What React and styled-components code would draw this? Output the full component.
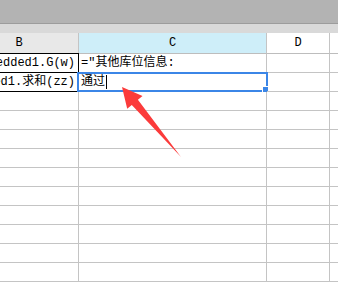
import React from 'react';
import styled, { createGlobalStyle } from 'styled-components';

const GlobalStyle = createGlobalStyle`
    html, body {
        margin: 0;
        padding: 0;
        background: #ffffff;
        overflow: hidden;
    }
    body {
        font-family: "Liberation Mono", "Noto Sans CJK SC", monospace;
        font-size: 12px;
        color: #000;
    }
`

const Page = styled.div`
    position: relative;
    width: 338px;
    height: 282px;
    overflow: hidden;
`
const ToolBand = styled.div`
    height: 23px;
    background: #b3b3b3;
    border-bottom: 1px solid #9c9c9c;
`
const SplitBand = styled.div`
    height: 9px;
    background: #d9d9d9;
`
const Sheet = styled.div`
    display: grid;
    grid-template-columns: 119px 188px 63px 120px;
    margin-left: -40px;
`
const HeadCell = styled.div`
    box-sizing: border-box;
    height: 21px;
    display: flex;
    align-items: center;
    justify-content: center;
    background: ${props => props.$active ? '#ceeef9' : props.$shade ? '#e8e8e8' : '#ffffff'};
    border-right: 1px solid #c4c4c4;
    border-bottom: 1px solid #bdbdbd;
    font-size: 12px;
`
const Cell = styled.div`
    position: relative;
    box-sizing: border-box;
    height: 19px;
    display: flex;
    align-items: center;
    justify-content: ${props => props.$right ? 'flex-end' : 'flex-start'};
    padding: ${props => props.$right ? '0 3px 0 0' : '0 0 0 2px'};
    border-right: 1px solid ${props => props.$boxed ? '#000' : '#c4c4c4'};
    border-bottom: 1px solid ${props => props.$boxed ? '#000' : '#c4c4c4'};
    box-shadow: ${props => props.$topEdge ? '0 -1px 0 #000' : 'none'};
    white-space: nowrap;
    overflow: ${props => props.$selected ? 'visible' : 'hidden'};
    line-height: 18px;
`
const Caret = styled.span`
    display: inline-block;
    width: 1px;
    height: 14px;
    margin-left: 1px;
    background: #000;
    vertical-align: middle;
`
const Selection = styled.div`
    position: absolute;
    left: -2px;
    top: -1px;
    right: -2px;
    bottom: -1px;
    border: 2px solid #3b86e7;
    pointer-events: none;
`
const FillHandle = styled.div`
    position: absolute;
    right: -3px;
    bottom: -3px;
    width: 5px;
    height: 5px;
    background: #3b86e7;
    border: 1px solid #ffffff;
`
const ArrowLayer = styled.svg`
    position: absolute;
    left: 0;
    top: 0;
    pointer-events: none;
`

// E sits past the right edge, so its letter is never seen
const columns = [
    { key: 'B', label: 'B', shade: true },
    { key: 'C', label: 'C', active: true },
    { key: 'D', label: 'D' },
    { key: 'E', label: '' },
]

const rowCount = 13

function App() {
    const rows = []
    for (let r = 0; r < rowCount; r++) {
        rows.push(
            <React.Fragment key={r}>
                <Cell $right $boxed={r < 2} $topEdge={r === 0}>
                    {r === 0 && 'Embedded1.G(w)'}
                    {r === 1 && 'Embedded1.求和(zz)'}
                </Cell>
                <Cell $selected={r === 1}>
                    {r === 0 && '="其他库位信息:'}
                    {r === 1 && <>通过<Caret /></>}
                    {r === 1 && (
                        <Selection>
                            <FillHandle />
                        </Selection>
                    )}
                </Cell>
                <Cell />
                <Cell />
            </React.Fragment>
        )
    }

    return (
        <Page>
            <GlobalStyle />
            <ToolBand />
            <SplitBand />
            <Sheet>
                {columns.map(col => (
                    <HeadCell key={col.key} $shade={col.shade} $active={col.active}>
                        {col.label}
                    </HeadCell>
                ))}
                {rows}
            </Sheet>
            <ArrowLayer width="338" height="282" viewBox="0 0 338 282">
                <polygon
                    points="122,87 142.5,96 137.9,99.7 181,157 131.8,104.9 127.2,108.8"
                    fill="#fb3b3b"
                />
            </ArrowLayer>
        </Page>
    );
}

export default App;
